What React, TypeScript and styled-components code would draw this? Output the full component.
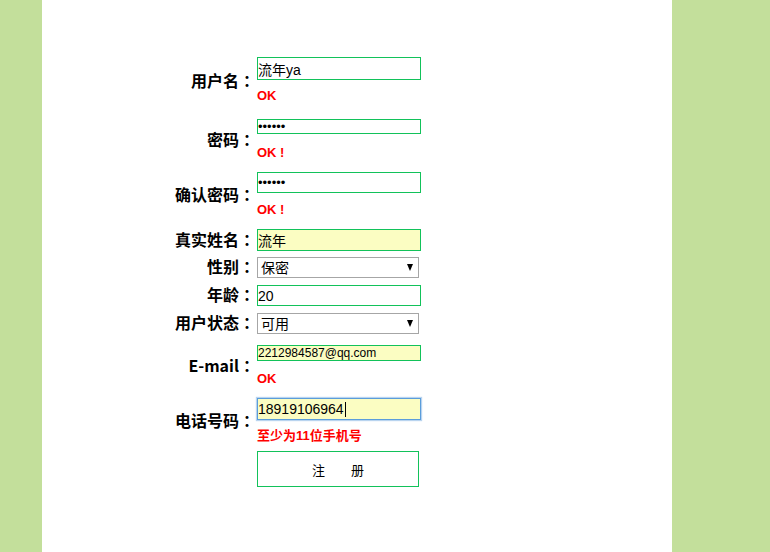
import React from "react";
import styled, { createGlobalStyle } from "styled-components";

const GREEN = "#12c25a";
const YELLOW = "#fbfdc2";

const Global = createGlobalStyle`
  html, body { margin: 0; padding: 0; }
  body {
    background: #c3df9b;
    font-family: "Liberation Sans", "Noto Sans CJK SC", sans-serif;
  }
`;

const Page = styled.div`
  margin-left: 42px;
  width: 630px;
  min-height: 552px;
  background: #ffffff;
  padding-top: 57px;
  box-sizing: border-box;
`;

const Form = styled.form`
  display: flex;
  flex-direction: column;
  padding-left: 128px;
`;

const Row = styled.div<{ $gap: number }>`
  display: grid;
  grid-template-columns: 85px 164px;
  column-gap: 2px;
  align-items: center;
  margin-top: ${(p) => p.$gap}px;
`;

const Label = styled.label`
  text-align: right;
  font-family: "Noto Sans CJK SC", "Liberation Sans", sans-serif;
  font-weight: 700;
  font-size: 16px;
  line-height: 20px;
  margin-top: -3px;
  color: #000;
  white-space: nowrap;
`;

const Colon = styled.span`
  font-family: "Noto Sans CJK TC", "Noto Sans CJK SC", sans-serif;
  font-weight: 700;
`;

const Cell = styled.div`
  display: flex;
  flex-direction: column;
  align-items: flex-start;
`;

const TextInput = styled.input<{ $h: number; $fill?: boolean; $focus?: boolean; $fs?: number }>`
  box-sizing: border-box;
  width: 164px;
  height: ${(p) => p.$h}px;
  margin: 0;
  padding: 0;
  border: 1px solid ${(p) => (p.$focus ? "#5b9ddb" : GREEN)};
  box-shadow: ${(p) => (p.$focus ? "0 0 1px 1px rgba(100,160,220,0.45)" : "none")};
  background: ${(p) => (p.$fill ? YELLOW : "#fff")};
  font-family: "Liberation Sans", "Noto Sans CJK SC", sans-serif;
  font-size: ${(p) => p.$fs ?? 14}px;
  color: #000;
  outline: none;
`;

const Msg = styled.div<{ $gap: number }>`
  margin-top: ${(p) => p.$gap}px;
  font-family: "Liberation Sans", "Noto Sans CJK SC", sans-serif;
  font-weight: 700;
  font-size: 13px;
  line-height: 18px;
  color: #ff0000;
  white-space: nowrap;
`;

const SelectWrap = styled.div`
  position: relative;
  width: 162px;
  height: 21px;
`;

const Select = styled.select`
  box-sizing: border-box;
  width: 162px;
  height: 21px;
  margin: 0;
  padding: 0 0 0 3px;
  border: 1px solid #a6a6a6;
  border-radius: 0;
  background: #fff;
  appearance: none;
  -webkit-appearance: none;
  font-family: "Liberation Sans", "Noto Sans CJK SC", sans-serif;
  font-size: 14px;
  color: #000;
  outline: none;
`;

const Arrow = styled.span`
  position: absolute;
  right: 6px;
  top: 7px;
  width: 0;
  height: 0;
  border-left: 3.5px solid transparent;
  border-right: 3.5px solid transparent;
  border-top: 7px solid #000;
  pointer-events: none;
`;

const InputWrap = styled.div`
  position: relative;
`;

const Caret = styled.span`
  position: absolute;
  left: 88px;
  top: 4px;
  width: 1px;
  height: 15px;
  background: #000;
`;

const Button = styled.button`
  box-sizing: border-box;
  width: 162px;
  height: 36px;
  margin: 0;
  border: 1px solid ${GREEN};
  background: #fff;
  font-family: "Noto Sans CJK SC", "Liberation Sans", sans-serif;
  font-size: 13px;
  color: #000;
  cursor: pointer;
`;

function FieldLabel({ text }: { text: string }) {
  return (
    <Label>
      {text}
      <Colon>：</Colon>
    </Label>
  );
}

export default function App() {
  return (
    <>
      <Global />
      <Page>
        <Form onSubmit={(e) => e.preventDefault()}>
          <Row $gap={0}>
            <FieldLabel text="用户名" />
            <Cell>
              <TextInput $h={23} defaultValue="流年ya" />
              <Msg $gap={7}>OK</Msg>
            </Cell>
          </Row>
          <Row $gap={14}>
            <FieldLabel text="密码" />
            <Cell>
              <TextInput $h={15} type="password" defaultValue="123456" $fs={13} />
              <Msg $gap={10}>OK !</Msg>
            </Cell>
          </Row>
          <Row $gap={10}>
            <FieldLabel text="确认密码" />
            <Cell>
              <TextInput $h={21} type="password" defaultValue="123456" $fs={13} />
              <Msg $gap={8}>OK !</Msg>
            </Cell>
          </Row>
          <Row $gap={10}>
            <FieldLabel text="真实姓名" />
            <Cell>
              <TextInput $h={22} $fill defaultValue="流年" />
            </Cell>
          </Row>
          <Row $gap={6}>
            <FieldLabel text="性别" />
            <Cell>
              <SelectWrap>
                <Select defaultValue="保密">
                  <option>保密</option>
                  <option>男</option>
                  <option>女</option>
                </Select>
                <Arrow />
              </SelectWrap>
            </Cell>
          </Row>
          <Row $gap={7}>
            <FieldLabel text="年龄" />
            <Cell>
              <TextInput $h={21} defaultValue="20" />
            </Cell>
          </Row>
          <Row $gap={7}>
            <FieldLabel text="用户状态" />
            <Cell>
              <SelectWrap>
                <Select defaultValue="可用">
                  <option>可用</option>
                  <option>禁用</option>
                </Select>
                <Arrow />
              </SelectWrap>
            </Cell>
          </Row>
          <Row $gap={11}>
            <FieldLabel text="E-mail" />
            <Cell>
              <TextInput $h={16} $fill $fs={12} defaultValue="2212984587@qq.com" />
              <Msg $gap={9}>OK</Msg>
            </Cell>
          </Row>
          <Row $gap={10}>
            <FieldLabel text="电话号码" />
            <Cell>
              <InputWrap>
                <TextInput $h={22} $fill $focus defaultValue="18919106964" />
                <Caret />
              </InputWrap>
              <Msg $gap={7}>至少为11位手机号</Msg>
            </Cell>
          </Row>
          <Row $gap={6}>
            <span />
            <Cell>
              <Button type="submit">注　　册</Button>
            </Cell>
          </Row>
        </Form>
      </Page>
    </>
  );
}
